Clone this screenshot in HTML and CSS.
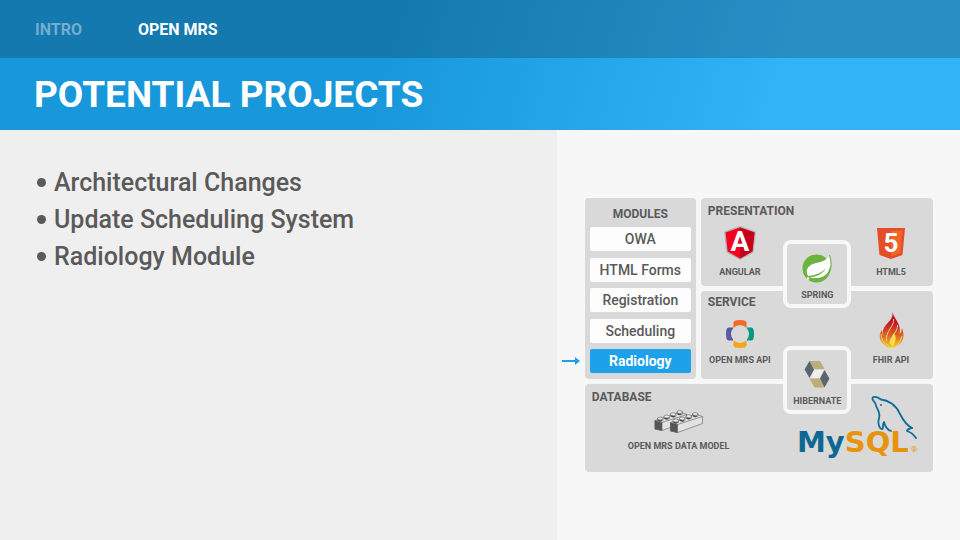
FILE: index.html
```html
<!DOCTYPE html>
<html lang="en">
<head>
<meta charset="utf-8">
<meta name="viewport" content="width=device-width, initial-scale=1">
<title>Potential Projects</title>
<link rel="stylesheet" href="styles.css">
</head>
<body>
<header class="header">
  <nav class="nav">
    <a class="nav-link" href="#intro">INTRO</a>
    <a class="nav-link current" href="#openmrs" aria-current="page">OPEN MRS</a>
  </nav>
  <h1 class="title">POTENTIAL PROJECTS</h1>
</header>
<main class="content">
  <section class="points">
    <ul class="point-list">
      <li>Architectural Changes</li>
      <li>Update Scheduling System</li>
      <li>Radiology Module</li>
    </ul>
  </section>
  <section class="figure-pane">
    <div class="stack">
      <section class="panel modules">
        <h2 class="panel-title">MODULES</h2>
        <ul class="module-list">
          <li class="module">OWA</li>
          <li class="module">HTML Forms</li>
          <li class="module">Registration</li>
          <li class="module">Scheduling</li>
          <li class="module active">
            <svg class="arrow" width="20" height="10" viewBox="0 0 20 10"><path d="M1 5H15" stroke="#1da1ea" stroke-width="2"/><path d="M14 1L19 5L14 9Z" fill="#1da1ea"/></svg>
            Radiology
          </li>
        </ul>
      </section>

      <section class="panel">
        <h2 class="panel-title">PRESENTATION</h2>
        <div class="tech-row">
          <div class="tech">
            <svg width="34" height="34" viewBox="0 0 34 34">
              <path d="M17 0L33 5.500L30.500 26.500L17 34L3.500 26.500L1 5.500Z" fill="#b3b3b3"/>
              <path d="M17 1.500L31.500 6.500L29.300 25.600L17 32.400L4.700 25.600L2.500 6.500Z" fill="#f5001f"/>
              <path d="M17 1.500L31.500 6.500L29.300 25.600L17 32.400Z" fill="#c4001f"/>
              <text class="logo-letter" x="17" y="25" font-size="28" text-anchor="middle">A</text>
            </svg>
            <span class="tech-name">ANGULAR</span>
          </div>
          <div class="tech">
            <svg width="34" height="34" viewBox="0 0 34 34">
              <path d="M3 2H31L28.500 29L17 33L5.500 29Z" fill="#e44d26"/>
              <path d="M17 4.500H28.300L26.300 27.300L17 30.500Z" fill="#f16529"/>
              <text class="logo-letter" x="17" y="26" font-size="26" text-anchor="middle">5</text>
            </svg>
            <span class="tech-name">HTML5</span>
          </div>
        </div>
      </section>

      <section class="panel service">
        <h2 class="panel-title">SERVICE</h2>
        <div class="tech-row">
          <div class="tech">
            <svg width="34" height="36" viewBox="0 0 34 36">
              <path d="M10.500 16V10.500Q10.500 8 17 8T23.500 10.500V16Z" fill="#f26a26"/>
              <path d="M10.500 28V33.500Q10.500 36 17 36T23.500 33.500V28Z" fill="#f2a71b"/>
              <path d="M10 15.500H5.500Q3 15.500 3 22T5.500 28.500H10Z" fill="#5b57a6"/>
              <path d="M24 15.500H28.500Q31 15.500 31 22T28.500 28.500H24Z" fill="#069883"/>
              <circle cx="17" cy="22" r="9" fill="#d9d9d9"/>
            </svg>
            <span class="tech-name">OPEN MRS API</span>
          </div>
          <div class="tech">
            <svg width="34" height="36" viewBox="0 0 34 36">
              <defs><linearGradient id="fire" x1="0" y1="0" x2="0" y2="1"><stop offset=".3" stop-color="#c31520"/><stop offset=".7" stop-color="#e0701a"/><stop offset="1" stop-color="#f6d51f"/></linearGradient></defs>
              <path d="M18.500 0C20 7 28 12 25.500 22Q28 20 28 16C31 24 30 32 20 35.500H14C5 31 4 23 8 18Q8 22 10 24C5 13 20 11 18.500 0Z" fill="url(#fire)"/>
              <path d="M19.500 7C21 14 11 19 12.500 29M23.500 13C24 21 16 23 16 32M7 22Q7 29 13 33M28 24Q27 30 22 34" fill="none" stroke="#e5cdb8" stroke-width="1"/>
              <path d="M20 21Q24 27 19 34Q14 32 17 27Q19 25 20 21Z" fill="#f5df4c"/>
            </svg>
            <span class="tech-name">FHIR API</span>
          </div>
        </div>
      </section>

      <section class="panel database">
        <h2 class="panel-title">DATABASE</h2>
        <div class="database-row">
          <div class="tech">
            <svg width="50" height="24" viewBox="0 0 50 24">
              <g id="brick" stroke="#5c5c5c" stroke-width=".6" stroke-linejoin="round">
                <path d="M1 10.500L26 2L33 4.500V11.500L8 20.500L1 19Z" fill="#e2e2e2"/>
                <path d="M1 10.500L8 12.500V20.500L1 19Z" fill="#555"/>
                <path d="M8 12.500L33 4.500" fill="none"/>
                <g fill="#eee"><path d="M3.500 8.500V10.500Q6.500 12.500 9 10.500V8.500Z"/><ellipse cx="6.200" cy="8.500" rx="2.700" ry="1.400"/><path d="M10 6.500V8.500Q13 10.500 15.500 8.500V6.500Z"/><ellipse cx="12.700" cy="6.500" rx="2.700" ry="1.400"/><path d="M16.500 4.200V6.200Q19 8.200 22 6.200V4.200Z"/><ellipse cx="19.200" cy="4.200" rx="2.700" ry="1.400"/><path d="M23 2V4Q26 6 28.500 4V2Z"/><ellipse cx="25.700" cy="2" rx="2.700" ry="1.400"/></g>
                <path d="M4 10Q6 11.500 8 10.500M10.500 8Q12.500 9.500 14.500 8.500M17 5.700Q19 7.200 21 6.200M23.500 3.500Q25.500 5 27.500 4" fill="none" stroke="#444" stroke-width="1.200"/>
              </g>
              <use href="#brick" x="15.500" y="2"/>
            </svg>
            <span class="tech-name">OPEN MRS DATA MODEL</span>
          </div>
          <svg class="mysql" width="122" height="68" viewBox="0 0 122 68">
            <g fill="none" stroke="#0f6c96" stroke-width="1.800" stroke-linecap="round" stroke-linejoin="round">
              <path d="M115 33C109 30 106 25 103 19C99 10 91 5 84 4.500C80 1 75 1 75.500 4C76 6 78 7 78.500 9C79 13 84 17 82 23C80 29 83 34 85 34C87 34 85 30 87 27C88 31 91 35 94 36"/>
              <path d="M115 33C113 34 110 34 110 36C113 37 117 40 119 43"/>
            </g>
            <circle cx="84" cy="10" r="1" fill="#0f6c96"/>
            <text class="wordmark" x="0" y="57"><tspan fill="#0f6891">My</tspan><tspan fill="#e8930c">SQL</tspan></text>
            <text class="registered" x="114" y="57" fill="#e8930c">®</text>
          </svg>
        </div>
      </section>

      <div class="bridge spring">
        <svg width="30" height="30" viewBox="0 0 30 30">
          <circle cx="14.500" cy="15.500" r="14" fill="#6db33f"/>
          <path d="M27 3C28.500 9 29 14 26 19C22 25 16 26 7 24.500C14 24 20 21 24 15.500C19 20 13 22.500 6 23C3 17 6 13 11 11C17 9 23 9 27 3Z" fill="#fff"/>
          <path d="M27.500 2C29.500 9 30 15 27 20" fill="none" stroke="#6db33f"/>
          <circle cx="6" cy="25.500" r="1.200" fill="#fff"/>
        </svg>
        <span class="tech-name">SPRING</span>
      </div>
      <div class="bridge hibernate">
        <svg width="30" height="30" viewBox="0 0 30 30">
          <path d="M7.500 2H18L22.500 10H12Z" fill="#bcae79"/>
          <path d="M7.500 2L12 10.500L7.500 19L2.500 10.500Z" fill="#59666c"/>
          <path d="M7.500 19.500H18L22.500 28.500H12.500Z" fill="#bcae79"/>
          <path d="M22.500 11L27.500 19.500L22.500 28.500L18 19.500Z" fill="#59666c"/>
          <path d="M12.500 11H21.500L17.500 19H8.500Z" fill="#eee"/>
        </svg>
        <span class="tech-name">HIBERNATE</span>
      </div>
    </div>
  </section>
</main>
</body>
</html>
```
FILE: styles.css
```css
* {
  box-sizing: border-box;
}

body {
  margin: 0;
  min-height: 100vh;
  display: flex;
  flex-direction: column;
  font-family: Roboto, "Liberation Sans", sans-serif;
  color: #5a5a5a;
  background: #f7f7f7;
}

h1, h2, ul {
  margin: 0;
  padding: 0;
}

ul {
  list-style: none;
}

.header {
  background: linear-gradient(106deg, #1898db 40%, #32b3f7 81%);
}

.nav {
  display: flex;
  gap: 56px;
  padding: 21px 35px 19px;
  background: rgba(0, 0, 0, 0.2);
}

.nav-link {
  font-size: 16px;
  line-height: 18px;
  font-weight: 700;
  color: #73aecf;
  text-decoration: none;
}

.nav-link.current {
  color: #fff;
}

.title {
  padding: 15px 34px 13px;
  font-size: 37px;
  line-height: 44px;
  font-weight: 700;
  color: #fff;
}

.content {
  flex: 1;
  display: grid;
  grid-template-columns: 58fr 42fr;
}

.points {
  padding: 34px 37px;
  background: #efefef;
}

.point-list li {
  display: flex;
  align-items: center;
  gap: 8px;
  font-size: 25px;
  line-height: 37px;
  font-weight: 500;
}

.point-list li::before {
  content: "";
  width: 9px;
  height: 9px;
  border-radius: 50%;
  background: currentColor;
}

.figure-pane {
  display: flex;
  align-items: center;
  padding: 0 27px 0 28px;
}

.stack {
  position: relative;
  flex: 1;
  display: grid;
  grid-template-columns: 111fr 232fr;
  grid-auto-rows: minmax(88px, auto);
  gap: 5px;
}

.panel {
  display: flex;
  flex-direction: column;
  padding: 6px 10px 8px 7px;
  border-radius: 4px;
  background: #d9d9d9;
}

.panel-title {
  font-size: 12px;
  line-height: 14px;
  font-weight: 700;
}

.modules {
  grid-row: span 2;
  gap: 6px;
  padding: 9px 5px 6px;
  text-align: center;
}

.module-list {
  flex: 1;
  display: flex;
  flex-direction: column;
  justify-content: space-between;
}

.module {
  position: relative;
  border-radius: 2px;
  background: #fdfdfd;
  font-size: 14px;
  line-height: 24px;
  font-weight: 500;
}

.module.active {
  background: #1da1ea;
  color: #fff;
  font-weight: 700;
}

.arrow {
  position: absolute;
  right: 100%;
  top: 7px;
  margin-right: 9px;
}

.tech-row {
  flex: 1;
  display: flex;
  justify-content: space-between;
  align-items: flex-end;
}

.service {
  padding: 4px 10px 13px 7px;
}

.tech {
  min-width: 64px;
  display: flex;
  flex-direction: column;
  align-items: center;
  gap: 6px;
}

.tech-name {
  font-size: 9px;
  line-height: 12px;
  font-weight: 700;
  white-space: nowrap;
}

.database {
  grid-column: span 2;
}

.database-row {
  display: flex;
  justify-content: space-between;
  padding: 6px 4px 0 36px;
}

.mysql {
  margin: -15px 0 -8px;
  overflow: visible;
}

.logo-letter {
  font-weight: 700;
  fill: #fff;
}

.wordmark {
  font-family: "DejaVu Sans", sans-serif;
  font-size: 29px;
  font-weight: 700;
}

.registered {
  font-size: 8px;
}

.bridge {
  position: absolute;
  left: 57%;
  width: 68px;
  height: 68px;
  display: flex;
  flex-direction: column;
  align-items: center;
  justify-content: flex-end;
  gap: 6px;
  padding-bottom: 3px;
  border: 4px solid #f7f7f7;
  border-radius: 8px;
  background: #d9d9d9;
}

.spring {
  top: 42px;
}

.hibernate {
  top: 148px;
}
```
